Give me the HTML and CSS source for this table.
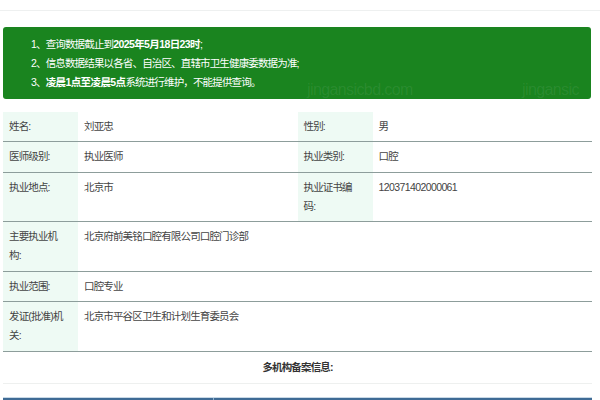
FILE: index.html
```html
<!DOCTYPE html>
<html lang="zh-CN">
<head>
<meta charset="utf-8">
<title>医师执业信息查询</title>
<link rel="stylesheet" href="styles.css">
</head>
<body>
<div class="page">
  <div class="topbar"></div>
  <div class="notice">
    <p>1、查询数据截止到<b>2025年5月18日23时</b>;</p>
    <p>2、信息数据结果以各省、自治区、直辖市卫生健康委数据为准;</p>
    <p>3、<b>凌晨1点至凌晨5点</b>系统进行维护，不能提供查询。</p>
    <span class="wm wm1">jingansicbd.com</span>
    <span class="wm wm2">jingansic</span>
  </div>
  <table class="info">
    <colgroup>
      <col class="c-label"><col class="c-value"><col class="c-label"><col class="c-value">
    </colgroup>
    <tr>
      <th>姓名:</th><td>刘亚忠</td>
      <th>性别:</th><td>男</td>
    </tr>
    <tr>
      <th>医师级别:</th><td>执业医师</td>
      <th>执业类别:</th><td>口腔</td>
    </tr>
    <tr>
      <th>执业地点:</th><td>北京市</td>
      <th>执业证书编码:</th><td class="num">120371402000061</td>
    </tr>
    <tr>
      <th>主要执业机构:</th><td colspan="3">北京府前美铭口腔有限公司口腔门诊部</td>
    </tr>
    <tr>
      <th>执业范围:</th><td colspan="3">口腔专业</td>
    </tr>
    <tr>
      <th>发证(批准)机关:</th><td colspan="3">北京市平谷区卫生和计划生育委员会</td>
    </tr>
  </table>
  <div class="section-title">多机构备案信息:</div>
  <div class="subhead"><span class="cell first"></span><span class="cell"></span></div>
</div>
</body>
</html>
```

FILE: styles.css
```css
html, body {
  margin: 0;
  padding: 0;
  background: #ffffff;
}

.page {
  width: 600px;
  font-family: "Liberation Sans", "Noto Sans CJK SC", sans-serif;
  font-size: 10.5px;
  letter-spacing: -0.85px;
  color: #444444;
}

.topbar {
  height: 10px;
  border-bottom: 1px solid #eef0f0;
}

.notice {
  position: relative;
  overflow: hidden;
  margin: 16px 0 0 3px;
  width: 588px;
  height: 72px;
  box-sizing: border-box;
  padding: 8px 0 0 28px;
  background: #1a841f;
  border-radius: 3px;
  color: #ffffff;
  line-height: 19px;
}

.notice p {
  margin: 0;
  position: relative;
  z-index: 1;
}

.notice b {
  font-weight: bold;
  letter-spacing: -0.6px;
}

.wm {
  position: absolute;
  top: 53px;
  font-family: "Liberation Sans", sans-serif;
  font-size: 16px;
  letter-spacing: -0.6px;
  color: rgba(255, 255, 255, 0.08);
  white-space: nowrap;
}

.wm1 { left: 304px; }
.wm2 { left: 519px; }

.info {
  margin: 13px 0 0 3px;
  width: 589px;
  border-collapse: collapse;
  table-layout: fixed;
}

.c-label { width: 75px; }
.c-value { width: 219.5px; }

.info th,
.info td {
  padding: 5px 6px 5px 6px;
  line-height: 19.3px;
  vertical-align: top;
  text-align: left;
  font-weight: normal;
  border-bottom: 1px solid #8d9d9b;
}

.info th {
  background: #eefaf4;
  padding-right: 13px;
}

.info td.num {
  letter-spacing: -0.6px;
}

.section-title {
  margin-left: 3px;
  width: 589px;
  height: 31px;
  line-height: 31px;
  text-align: center;
  font-weight: bold;
  color: #333333;
  border-bottom: 1px solid #eef0ef;
}

.subhead {
  display: flex;
  margin: 13px 0 0 3px;
  width: 589px;
  height: 12px;
  background: #3f6b95;
  border-top: 1px solid #c9d9e6;
}

.subhead .cell {
  flex: 1;
}

.subhead .cell.first {
  flex: 0 0 210px;
  border-right: 1px solid #8fb0cc;
}
```
